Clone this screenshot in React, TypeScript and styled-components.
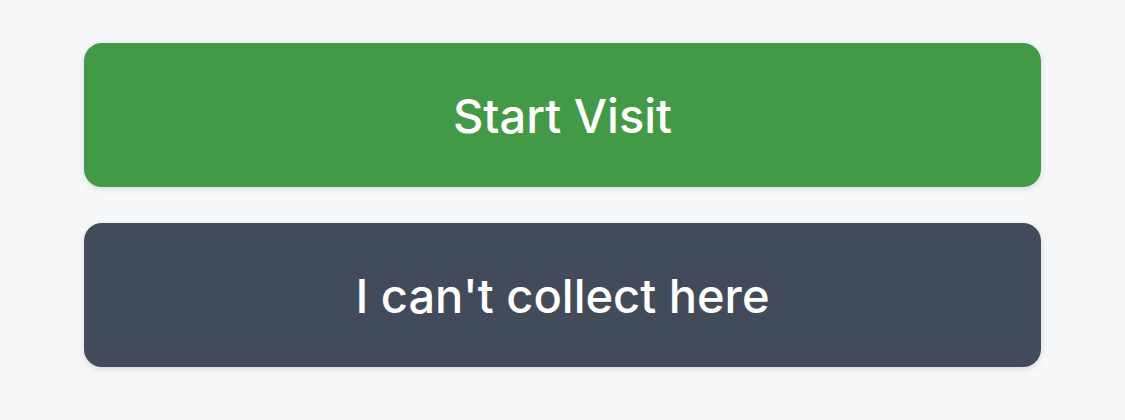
import styled, { createGlobalStyle } from "styled-components";

const GlobalStyle = createGlobalStyle`
  html, body {
    margin: 0;
    padding: 0;
    background: #f6f7f9;
    font-family: Inter, "Liberation Sans", sans-serif;
  }
`;

const Page = styled.div`
  display: flex;
  flex-direction: column;
  gap: 36px;
  padding: 43px 84px;
  min-height: 420px;
  box-sizing: border-box;
`;

const ActionButton = styled.button<{ $variant: "primary" | "secondary" }>`
  height: 144px;
  border: none;
  border-radius: 18px;
  background: ${(p) => (p.$variant === "primary" ? "#439a46" : "#424b5a")};
  color: #ffffff;
  font-family: Inter, "Liberation Sans", sans-serif;
  font-size: 47px;
  font-weight: 500;
  box-shadow: 0 2px 6px rgba(0, 0, 0, 0.12);
  cursor: pointer;
`;

export default function App() {
  return (
    <>
      <GlobalStyle />
      <Page>
        <ActionButton $variant="primary">Start Visit</ActionButton>
        <ActionButton $variant="secondary">I can't collect here</ActionButton>
      </Page>
    </>
  );
}
